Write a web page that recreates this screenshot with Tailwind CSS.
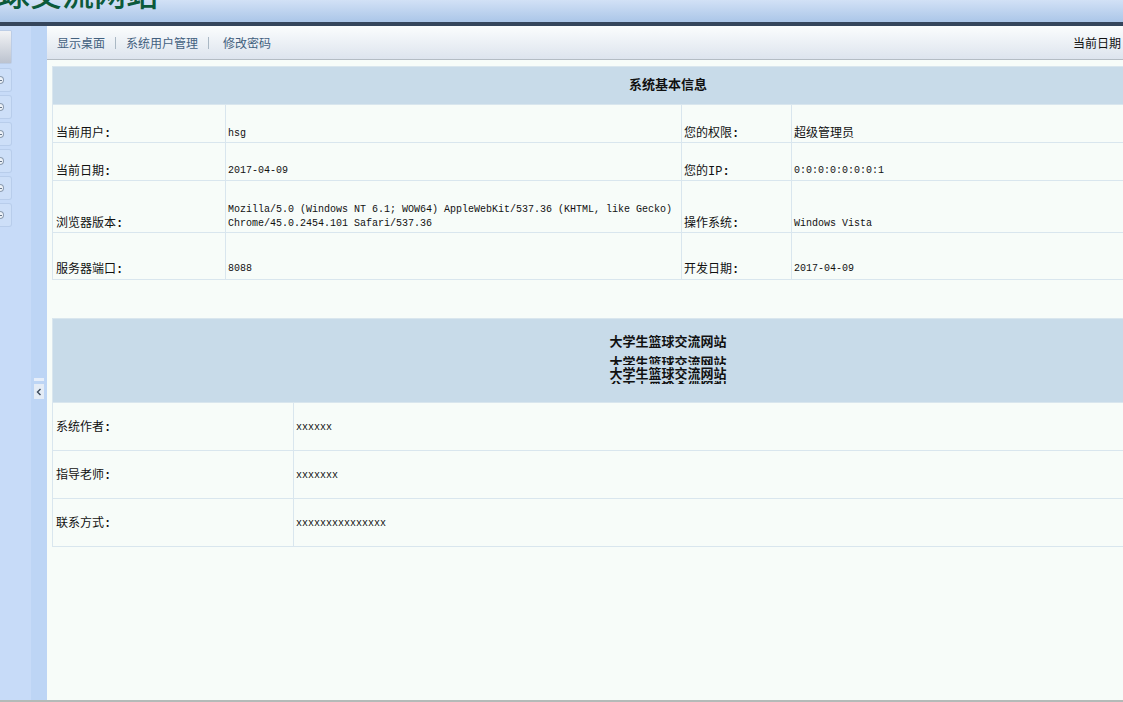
<!DOCTYPE html>
<html lang="zh-CN">
<head>
  <meta charset="UTF-8">
  <title>大学生篮球交流网站</title>
  <script src="https://cdn.jsdelivr.net/npm/@tailwindcss/browser@4"></script>
</head>
<body class="w-[1123px] h-[702px] overflow-hidden flex flex-col bg-[#f7fcf9] text-[12px] text-[#111] font-['Liberation_Mono','Noto_Sans_CJK_SC',monospace]">

  <!-- Top banner -->
  <div class="h-[22px] shrink-0 overflow-hidden bg-gradient-to-b from-[#d2e1f6] to-[#abc6e8]">
    <div class="-mt-[24px] -ml-[130px] text-[32px] leading-8 whitespace-nowrap font-medium text-[#0c5a3a] font-['Noto_Sans_CJK_SC',sans-serif]">大学生篮球交流网站</div>
  </div>
  <div class="h-[4px] shrink-0 bg-[#35465c]"></div>

  <div class="flex flex-1 min-h-0 border-b-2 border-[#b4bab8]">

    <!-- Left accordion -->
    <div class="w-[31px] shrink-0 bg-[#c7dbf8] pt-[4px] flex flex-col gap-[3px]">
      <div class="w-[12px] h-[34px] mb-[1px] rounded-r-[2px] border border-l-0 border-[#bccde6] bg-gradient-to-b from-[#f2f3f5] to-[#bcc3cf]"></div>
      <div class="w-[12px] h-[24px] rounded-r-[3px] border border-l-0 border-[#b8cdeb] bg-[#cddff8] flex items-center"><span class="w-[4px] h-[8px] rounded-r-full border border-l-0 border-[#8c9cb0] bg-[#edf2f8] flex items-center"><span class="w-[2px] h-px bg-[#66768a]"></span></span></div>
      <div class="w-[12px] h-[24px] rounded-r-[3px] border border-l-0 border-[#b8cdeb] bg-[#cddff8] flex items-center"><span class="w-[4px] h-[8px] rounded-r-full border border-l-0 border-[#8c9cb0] bg-[#edf2f8] flex items-center"><span class="w-[2px] h-px bg-[#66768a]"></span></span></div>
      <div class="w-[12px] h-[24px] rounded-r-[3px] border border-l-0 border-[#b8cdeb] bg-[#cddff8] flex items-center"><span class="w-[4px] h-[8px] rounded-r-full border border-l-0 border-[#8c9cb0] bg-[#edf2f8] flex items-center"><span class="w-[2px] h-px bg-[#66768a]"></span></span></div>
      <div class="w-[12px] h-[24px] rounded-r-[3px] border border-l-0 border-[#b8cdeb] bg-[#cddff8] flex items-center"><span class="w-[4px] h-[8px] rounded-r-full border border-l-0 border-[#8c9cb0] bg-[#edf2f8] flex items-center"><span class="w-[2px] h-px bg-[#66768a]"></span></span></div>
      <div class="w-[12px] h-[24px] rounded-r-[3px] border border-l-0 border-[#b8cdeb] bg-[#cddff8] flex items-center"><span class="w-[4px] h-[8px] rounded-r-full border border-l-0 border-[#8c9cb0] bg-[#edf2f8] flex items-center"><span class="w-[2px] h-px bg-[#66768a]"></span></span></div>
      <div class="w-[12px] h-[24px] rounded-r-[3px] border border-l-0 border-[#b8cdeb] bg-[#cddff8] flex items-center"><span class="w-[4px] h-[8px] rounded-r-full border border-l-0 border-[#8c9cb0] bg-[#edf2f8] flex items-center"><span class="w-[2px] h-px bg-[#66768a]"></span></span></div>
    </div>

    <!-- Splitter with collapse handle -->
    <div class="w-[16px] shrink-0 bg-[#bdd5f5] pt-[352px] pl-[3px]">
      <div class="w-[10px] h-[3px] bg-[#e6eefa]"></div>
      <div class="w-[10px] h-[15px] mt-[3px] bg-[#e4ecf6] flex items-center justify-center">
        <svg width="6" height="8" viewBox="0 0 6 8" fill="none" stroke="#3c4a5c" stroke-width="1.4"><path d="M4.5 1 L1.5 4 L4.5 7"/></svg>
      </div>
    </div>

    <!-- Main area -->
    <div class="flex-1 min-w-0 overflow-hidden">
      <div class="h-[34px] flex items-center border-b border-[#b4bcc4] bg-gradient-to-b from-[#fbfdfd] to-[#dde4ee] pl-[10px] pr-[2px] font-['Noto_Sans_CJK_SC',sans-serif] text-[#42607e]">
        <span>显示桌面</span>
        <span class="w-px h-[12px] bg-[#aab8c4] ml-[10px] mr-[10px]"></span>
        <span>系统用户管理</span>
        <span class="w-px h-[12px] bg-[#aab8c4] ml-[10px] mr-[14px]"></span>
        <span>修改密码</span>
        <span class="ml-auto text-[#111]">当前日期</span>
      </div>

      <div class="pt-[6px] pl-[5px]">
        <table class="w-[1230px] table-fixed border-collapse mb-[38px]">
          <colgroup><col class="w-[173px]"><col class="w-[456px]"><col class="w-[110px]"><col></colgroup>
          <tr class="h-[38px]">
            <th colspan="4" class="border border-[#d9e6ee] bg-[#c8dbe9] text-[13px] font-bold text-center align-middle pl-[2px] pb-[3px] font-['Noto_Sans_CJK_SC',sans-serif]">系统基本信息</th>
          </tr>
          <tr class="h-[38px]">
            <td class="border border-[#d9e6ee] align-bottom pl-[3px] pb-[1px] leading-[14px] font-['Noto_Sans_CJK_SC',sans-serif]">当前用户<span class="font-bold font-['Liberation_Mono',monospace]">:</span></td>
            <td class="border border-[#d9e6ee] align-bottom pl-[2px] text-[10px] leading-[17px]">hsg</td>
            <td class="border border-[#d9e6ee] align-bottom pl-[2px] pb-[1px] leading-[14px] font-['Noto_Sans_CJK_SC',sans-serif]">您的权限<span class="font-bold font-['Liberation_Mono',monospace]">:</span></td>
            <td class="border border-[#d9e6ee] align-bottom pl-[2px] pb-[1px] font-['Noto_Sans_CJK_SC',sans-serif]">超级管理员</td>
          </tr>
          <tr class="h-[38px]">
            <td class="border border-[#d9e6ee] align-bottom pl-[3px] pb-[1px] leading-[14px] font-['Noto_Sans_CJK_SC',sans-serif]">当前日期<span class="font-bold font-['Liberation_Mono',monospace]">:</span></td>
            <td class="border border-[#d9e6ee] align-bottom pl-[2px] pb-[1px] text-[10px] leading-[17px]">2017-04-09</td>
            <td class="border border-[#d9e6ee] align-bottom pl-[2px] pb-[1px] leading-[14px] font-['Noto_Sans_CJK_SC',sans-serif]">您的<span class="font-['Liberation_Mono',monospace]">IP</span><span class="font-bold font-['Liberation_Mono',monospace]">:</span></td>
            <td class="border border-[#d9e6ee] align-bottom pl-[2px] pb-[1px] text-[10px] leading-[17px]">0:0:0:0:0:0:0:1</td>
          </tr>
          <tr class="h-[52px]">
            <td class="border border-[#d9e6ee] align-bottom pl-[3px] pb-[1px] leading-[14px] font-['Noto_Sans_CJK_SC',sans-serif]">浏览器版本<span class="font-bold font-['Liberation_Mono',monospace]">:</span></td>
            <td class="border border-[#d9e6ee] align-bottom pl-[2px] pb-[1px] text-[10px] leading-[14px]">Mozilla/5.0 (Windows NT 6.1; WOW64) AppleWebKit/537.36 (KHTML, like Gecko) Chrome/45.0.2454.101 Safari/537.36</td>
            <td class="border border-[#d9e6ee] align-bottom pl-[2px] pb-[1px] leading-[14px] font-['Noto_Sans_CJK_SC',sans-serif]">操作系统<span class="font-bold font-['Liberation_Mono',monospace]">:</span></td>
            <td class="border border-[#d9e6ee] align-bottom pl-[2px] text-[10px] leading-[17px]">Windows Vista</td>
          </tr>
          <tr class="h-[47px]">
            <td class="border border-[#d9e6ee] align-bottom pl-[3px] pb-[2px] leading-[14px] font-['Noto_Sans_CJK_SC',sans-serif]">服务器端口<span class="font-bold font-['Liberation_Mono',monospace]">:</span></td>
            <td class="border border-[#d9e6ee] align-bottom pl-[2px] pb-[2px] text-[10px] leading-[17px]">8088</td>
            <td class="border border-[#d9e6ee] align-bottom pl-[2px] pb-[2px] leading-[14px] font-['Noto_Sans_CJK_SC',sans-serif]">开发日期<span class="font-bold font-['Liberation_Mono',monospace]">:</span></td>
            <td class="border border-[#d9e6ee] align-bottom pl-[2px] pb-[2px] text-[10px] leading-[17px]">2017-04-09</td>
          </tr>
        </table>

        <table class="w-[1230px] table-fixed border-collapse">
          <colgroup><col class="w-[241px]"><col></colgroup>
          <tr class="h-[84px]">
            <th colspan="2" class="border border-[#d9e6ee] bg-[#c8dbe9] text-[13px] font-bold text-center align-top pt-[14px] pl-[2px] font-['Noto_Sans_CJK_SC',sans-serif]">
              <div class="h-[16px] leading-[16px]">大学生篮球交流网站</div>
              <!-- the repeated title lines are torn in the capture, so they are clipped slices -->
              <div class="mt-[7px] h-[9px] overflow-hidden leading-[16px]"><div class="-mt-[2px]">大学生篮球交流网站</div></div>
              <div class="mt-[1px] h-[14px] overflow-hidden leading-[14px]">大学生篮球交流网站</div>
              <div class="mt-[1px] h-[3px] overflow-hidden leading-[16px]"><div class="-mt-[10px]">大学生篮球交流网站</div></div>
            </th>
          </tr>
          <tr class="h-[48px]">
            <td class="border border-[#d9e6ee] align-middle pl-[3px] leading-[14px] font-['Noto_Sans_CJK_SC',sans-serif]">系统作者<span class="font-bold font-['Liberation_Mono',monospace]">:</span></td>
            <td class="border border-[#d9e6ee] align-middle pl-[2px] pt-[2px] text-[10px]">xxxxxx</td>
          </tr>
          <tr class="h-[48px]">
            <td class="border border-[#d9e6ee] align-middle pl-[3px] leading-[14px] font-['Noto_Sans_CJK_SC',sans-serif]">指导老师<span class="font-bold font-['Liberation_Mono',monospace]">:</span></td>
            <td class="border border-[#d9e6ee] align-middle pl-[2px] pt-[2px] text-[10px]">xxxxxxx</td>
          </tr>
          <tr class="h-[48px]">
            <td class="border border-[#d9e6ee] align-middle pl-[3px] leading-[14px] font-['Noto_Sans_CJK_SC',sans-serif]">联系方式<span class="font-bold font-['Liberation_Mono',monospace]">:</span></td>
            <td class="border border-[#d9e6ee] align-middle pl-[2px] pt-[2px] text-[10px]">xxxxxxxxxxxxxxx</td>
          </tr>
        </table>
      </div>
    </div>
  </div>
</body>
</html>
